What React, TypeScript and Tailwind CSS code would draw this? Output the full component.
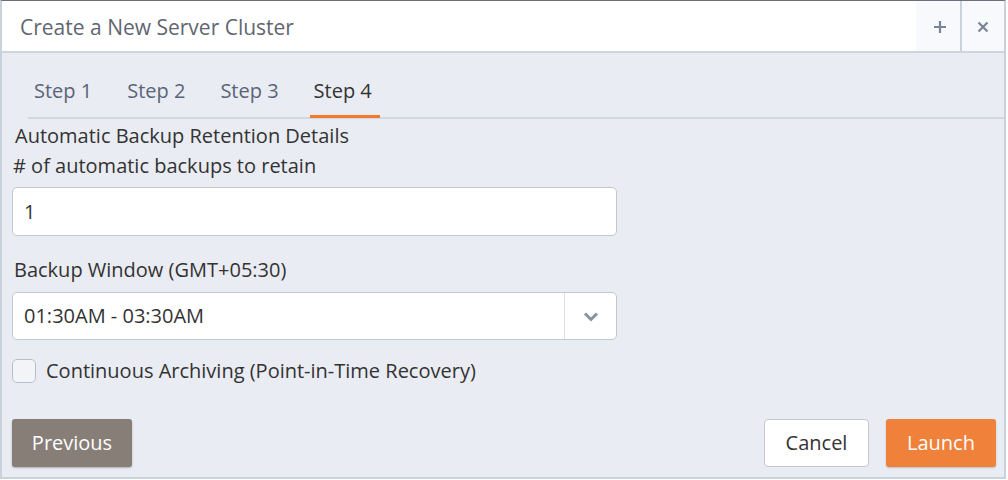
import React from "react";

export default function App() {
  const font = { fontFamily: '"Open Sans", "Noto Sans", sans-serif' };
  return (
    <div className="w-[1008px] h-[480px] bg-white" style={font}>
      <div className="w-[1006px] h-[479px] border-t border-t-[#6b6f78] border-l-2 border-l-[#c9d1dc] border-r-2 border-r-[#c9d1dc] border-b-2 border-b-[#c9d1dc] bg-[#e9ecf2] flex flex-col">
        {/* header */}
        <div className="h-[52px] bg-white border-b-2 border-[#cfd5de] flex items-stretch">
          <div className="flex-1 flex items-center pl-[18px] pt-[4px] text-[21px] text-[#5f6670]">
            Create a New Server Cluster
          </div>
          <div className="w-[46px] bg-[#f8f9fc] flex items-center justify-center pl-[3px] pt-[2px] border-r-2 border-[#c9d1dc]">
            <svg width="14" height="14" viewBox="0 0 14 14">
              <path d="M7 1v12M1 7h12" stroke="#7a8494" strokeWidth="2.2" />
            </svg>
          </div>
          <div className="w-[42px] bg-[#f8f9fc] flex items-center justify-center pt-[2px]">
            <svg width="12" height="12" viewBox="0 0 12 12">
              <path d="M1.5 1.5l9 9M10.5 1.5l-9 9" stroke="#7a8494" strokeWidth="2.2" />
            </svg>
          </div>
        </div>
        {/* tabs */}
        <div className="ml-[26px] mt-[11px] border-b-2 border-[#d3d8df] flex items-end h-[55px] gap-[23px]">
          <div className="px-[6px] h-full flex items-center text-[20px] text-[#5a6478]">Step 1</div>
          <div className="px-[6px] h-full flex items-center text-[20px] text-[#5a6478]">Step 2</div>
          <div className="px-[6px] h-full flex items-center text-[20px] text-[#5a6478]">Step 3</div>
          <div className="relative px-[6px] h-full flex items-center text-[20px] text-[#333]">
            Step 4
            <div className="absolute left-[2px] right-[-2px] bottom-[-1px] h-[3px] bg-[#f07a2a]" />
          </div>
        </div>
        {/* content */}
        <div className="pl-[10px] pr-[8px] flex flex-col">
          <div className="text-[20px] text-[#333] ml-[3px] leading-[26px] mt-[4px]">Automatic Backup Retention Details</div>
          <div className="text-[20px] text-[#333] ml-[1px] leading-[26px] mt-[4px]">
            # of automatic backups to retain
          </div>
          <div className="mt-[8px] w-[605px] h-[49px] bg-white border border-[#c3c8d0] rounded-[5px] flex items-center pl-[11px] text-[20px] text-[#333]">
            1
          </div>
          <div className="text-[20px] text-[#333] ml-[2px] mt-[21px] leading-[26px]">Backup Window (GMT+05:30)</div>
          <div className="mt-[9px] w-[605px] h-[48px] bg-white border border-[#c3c8d0] rounded-[5px] flex items-stretch text-[20px] text-[#333]">
            <div className="flex-1 flex items-center pl-[11px]">01:30AM - 03:30AM</div>
            <div className="w-[52px] border-l border-[#dcdfe4] flex items-center justify-center">
              <svg width="16" height="11" viewBox="0 0 16 11">
                <path d="M2 2.5l6 6 6-6" stroke="#8a929e" strokeWidth="3" fill="none" />
              </svg>
            </div>
          </div>
          <div className="mt-[18px] flex items-center">
            <div className="w-[24px] h-[24px] bg-[#f3f4f7] border border-[#b9bec7] rounded-[5px]" />
            <div className="ml-[10px] text-[20px] leading-[26px] text-[#333]">Continuous Archiving (Point-in-Time Recovery)</div>
          </div>
          <div className="mt-[35px] flex items-center">
            <button className="w-[120px] h-[48px] bg-[#877e77] text-white text-[20px] rounded-[3px] shadow-[0_1px_2px_rgba(0,0,0,0.25)]">
              Previous
            </button>
            <div className="flex-1" />
            <button className="w-[105px] h-[48px] bg-white text-[#333] text-[20px] rounded-[4px] border border-[#c3c8d0]">
              Cancel
            </button>
            <button className="ml-[17px] w-[110px] h-[48px] bg-[#f0813a] text-white text-[20px] rounded-[3px] shadow-[0_1px_2px_rgba(0,0,0,0.2)]">
              Launch
            </button>
          </div>
        </div>
      </div>
    </div>
  );
}
